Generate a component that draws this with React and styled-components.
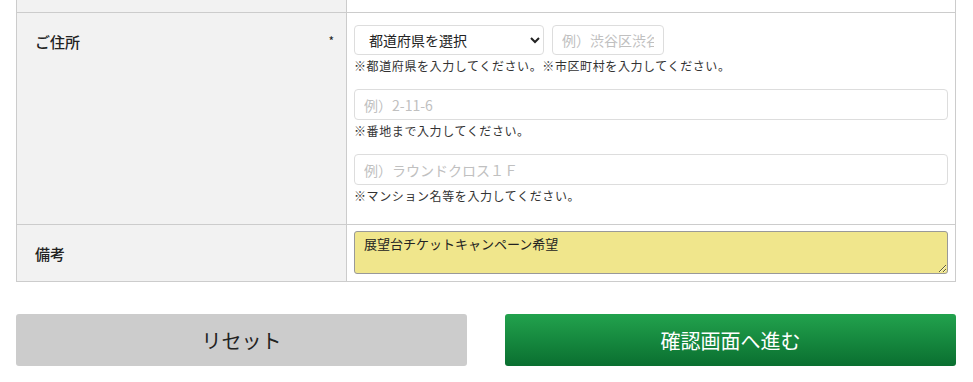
import React from "react";
import styled, { createGlobalStyle } from "styled-components";

const GlobalStyle = createGlobalStyle`
  body {
    margin: 0;
    background: #fff;
    font-family: "Noto Sans CJK JP", "Noto Sans", sans-serif;
    color: #333;
  }
`;

const Page = styled.div`
  padding: 0 17px 0 16px;
`;

const FormTable = styled.table`
  width: 100%;
  border-collapse: collapse;
  table-layout: fixed;
  margin-top: -1px;
`;

const Row = styled.tr`
  border: 1px solid #ccc;
`;

const Label = styled.th`
  width: 330px;
  box-sizing: border-box;
  background: #f2f2f2;
  border: 1px solid #ccc;
  text-align: left;
  vertical-align: ${(p) => (p.$middle ? "middle" : "top")};
  padding: ${(p) => (p.$middle ? "7px 18px" : "18px 18px")};
  font-size: 15px;
  font-weight: 500;
  color: #222;
  position: relative;
`;

const Spacer = styled.td`
  height: 12px;
  padding: 0;
  border: 1px solid #ccc;
  background: ${(p) => (p.$grey ? "#f2f2f2" : "#fff")};
`;

const Required = styled.span`
  position: absolute;
  right: 12px;
  top: 19px;
  font-size: 12px;
  font-weight: 400;
`;

const Cell = styled.td`
  border: 1px solid #ccc;
  padding: ${(p) => p.$pad || "12px 7px 5px"};
  vertical-align: top;
`;

const Field = styled.div`
  margin-bottom: 14px;
`;

const Inline = styled.div`
  display: flex;
  gap: 8px;
`;

const Select = styled.select`
  width: 190px;
  height: 30px;
  box-sizing: border-box;
  border: 1px solid #ddd;
  border-radius: 4px;
  background: #fff;
  font-family: inherit;
  font-size: 14px;
  color: #222;
  padding: 0 8px 0 10px;
`;

const Input = styled.input`
  display: block;
  width: ${(p) => p.$w || "100%"};
  height: ${(p) => p.$h || "31px"};
  box-sizing: border-box;
  border: 1px solid #ddd;
  border-radius: 4px;
  font-family: inherit;
  font-size: 14px;
  padding: 0 9px;
  color: #222;
  &::placeholder {
    color: #c0c0c0;
  }
`;

const Note = styled.p`
  margin: 2px 0 0;
  font-size: 12px;
  line-height: 18px;
  letter-spacing: 0.6px;
  color: #333;
`;

const Memo = styled.textarea`
  display: block;
  width: 100%;
  height: 43px;
  box-sizing: border-box;
  background: #f0e68c;
  border: 1px solid #999;
  border-radius: 3px;
  font-family: inherit;
  font-size: 13px;
  color: #222;
  padding: 2px 9px;
  resize: vertical;
`;

const Buttons = styled.div`
  display: flex;
  justify-content: space-between;
  gap: 38px;
  margin-top: 32px;
`;

const Button = styled.button`
  flex: 1;
  height: 52px;
  border: none;
  border-radius: 3px;
  font-family: inherit;
  font-size: 20px;
  cursor: pointer;
  color: ${(p) => (p.$primary ? "#fff" : "#222")};
  background: ${(p) =>
    p.$primary ? "linear-gradient(#22a24d, #0a6f30)" : "#cccccc"};
`;

export default function App() {
  return (
    <Page>
      <GlobalStyle />
      <FormTable>
        <colgroup>
          <col style={{ width: 330 }} />
          <col />
        </colgroup>
        <tbody>
          <Row>
            <Spacer $grey />
            <Spacer />
          </Row>
          <Row>
            <Label>
              ご住所
              <Required>*</Required>
            </Label>
            <Cell>
              <Field>
                <Inline>
                  <Select defaultValue="">
                    <option value="">都道府県を選択</option>
                    <option>東京都</option>
                  </Select>
                  <Input $w="112px" $h="30px" placeholder="例）渋谷区渋谷" />
                </Inline>
                <Note>※都道府県を入力してください。※市区町村を入力してください。</Note>
              </Field>
              <Field>
                <Input placeholder="例）2-11-6" />
                <Note>※番地まで入力してください。</Note>
              </Field>
              <Field>
                <Input placeholder="例）ラウンドクロス１Ｆ" />
                <Note>※マンション名等を入力してください。</Note>
              </Field>
            </Cell>
          </Row>
          <Row>
            <Label $middle>備考</Label>
            <Cell $pad="6px 7px 7px">
              <Memo defaultValue="展望台チケットキャンペーン希望" />
            </Cell>
          </Row>
        </tbody>
      </FormTable>
      <Buttons>
        <Button type="reset">リセット</Button>
        <Button type="submit" $primary>
          確認画面へ進む
        </Button>
      </Buttons>
    </Page>
  );
}
